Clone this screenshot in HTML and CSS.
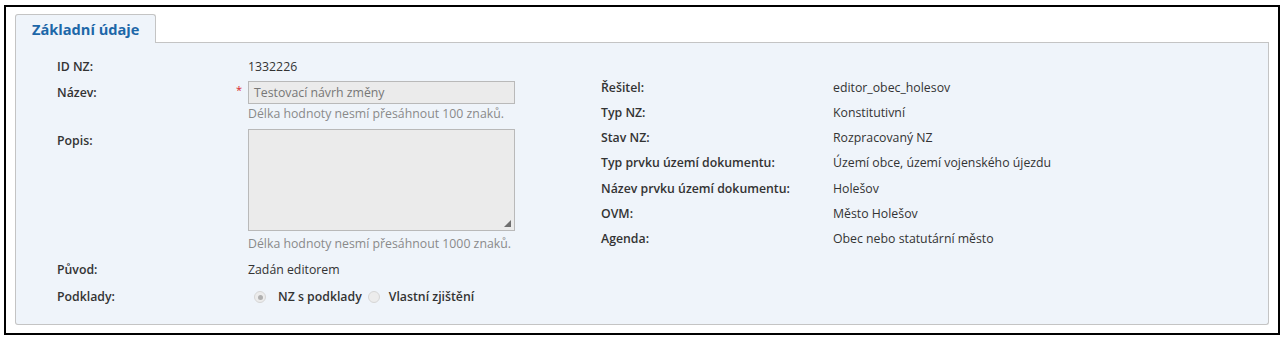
FILE: index.html
```html
<!DOCTYPE html>
<html lang="cs">
<head>
<meta charset="utf-8">
<title>Základní údaje</title>
<link rel="stylesheet" href="styles.css">
</head>
<body>
<div class="frame">
  <div class="tabs">
    <div class="tab">Základní údaje</div>
    <div class="tab-fill"></div>
  </div>
  <div class="panel">
    <div class="col-left">
      <div class="row r-id"><div class="lbl">ID NZ:</div><div class="val">1332226</div></div>
      <div class="row r-nazev">
        <div class="lbl lbl-field">Název:<span class="req">*</span></div>
        <div class="val">
          <div class="input">Testovací návrh změny</div>
          <div class="hint">Délka hodnoty nesmí přesáhnout 100 znaků.</div>
        </div>
      </div>
      <div class="row r-popis">
        <div class="lbl lbl-field">Popis:</div>
        <div class="val">
          <div class="textarea">
            <svg class="grip" width="7" height="7" viewBox="0 0 7 7"><path d="M7 0 L7 7 L0 7 Z" fill="#6f6f6f"/></svg>
          </div>
          <div class="hint hint-2">Délka hodnoty nesmí přesáhnout 1000 znaků.</div>
        </div>
      </div>
      <div class="row r-puvod"><div class="lbl">Původ:</div><div class="val">Zadán editorem</div></div>
      <div class="row r-podklady">
        <div class="lbl">Podklady:</div>
        <div class="val radios">
          <span class="radio checked r1"></span><span class="rlabel rl1">NZ s podklady</span>
          <span class="radio r2"></span><span class="rlabel rl2">Vlastní zjištění</span>
        </div>
      </div>
    </div>
    <div class="col-right">
      <div class="rrow"><div class="lbl">Řešitel:</div><div class="val">editor_obec_holesov</div></div>
      <div class="rrow"><div class="lbl">Typ NZ:</div><div class="val">Konstitutivní</div></div>
      <div class="rrow"><div class="lbl">Stav NZ:</div><div class="val">Rozpracovaný NZ</div></div>
      <div class="rrow"><div class="lbl">Typ prvku území dokumentu:</div><div class="val">Území obce, území vojenského újezdu</div></div>
      <div class="rrow"><div class="lbl">Název prvku území dokumentu:</div><div class="val">Holešov</div></div>
      <div class="rrow"><div class="lbl">OVM:</div><div class="val">Město Holešov</div></div>
      <div class="rrow"><div class="lbl">Agenda:</div><div class="val">Obec nebo statutární město</div></div>
    </div>
  </div>
</div>
</body>
</html>
```

FILE: styles.css
```css
* { box-sizing: border-box; }
html, body { margin: 0; padding: 0; background: #fff; }
body {
  font-family: "Open Sans", "Noto Sans", "DejaVu Sans", sans-serif;
  font-size: 12.3px;
  color: #333;
}
.frame {
  margin: 5px 0 0 4px;
  width: 1276px;
  height: 330px;
  border: 2px solid #000;
  padding: 7px 9px 8px 9px;
  display: flex;
  flex-direction: column;
}
.tabs {
  display: flex;
  height: 29px;
  flex: none;
}
.tab {
  height: 29px;
  padding: 0 16px;
  border: 1px solid #c4c4c4;
  border-bottom: none;
  border-radius: 3px 3px 0 0;
  background: #eff4fa;
  color: #1d67a8;
  font-weight: 700;
  font-size: 14.6px;
  display: flex;
  align-items: center;
}
.tab-fill {
  flex: 1;
  border-bottom: 1px solid #c4c4c4;
}
.panel {
  flex: 1;
  background: #eff4fa;
  border: 1px solid #c4c4c4;
  border-top: none;
  border-radius: 0 0 3px 3px;
  padding: 14px 0 0 41px;
  display: flex;
}
.lbl { font-weight: 600; color: #333; }
.val { color: #333; }
.col-left { width: 544px; flex: none; }
.row {
  display: grid;
  grid-template-columns: 191px 1fr;
  line-height: 20px;
}
.lbl-field {
  padding-top: 2px;
  display: flex;
  justify-content: space-between;
  padding-right: 6px;
}
.req {
  color: #d9252a;
  font-size: 11px;
  line-height: 11px;
  margin-top: 1px;
  font-weight: 400;
}
.r-nazev { margin-top: 4px; }
.input {
  width: 267px;
  height: 23px;
  background: #ebebeb;
  border: 1px solid #b9b9b9;
  color: #777;
  line-height: 21px;
  padding-left: 5px;
}
.hint { color: #8a8a8a; line-height: 20px; }
.hint-2 { margin-top: 3px; }
.r-popis { margin-top: 5px; }
.textarea {
  position: relative;
  width: 267px;
  height: 102px;
  background: #ebebeb;
  border: 1px solid #b9b9b9;
}
.grip {
  position: absolute;
  right: 3px;
  bottom: 3px;
}
.r-puvod { margin-top: 6px; }
.r-podklady { margin-top: 7px; }
.radios { display: flex; align-items: center; }
.radio {
  width: 12px;
  height: 12px;
  border-radius: 50%;
  border: 1px solid #d6d6d6;
  background: #ececec;
  display: inline-flex;
  align-items: center;
  justify-content: center;
  flex: none;
}
.radio.checked::after {
  content: "";
  width: 5px;
  height: 5px;
  border-radius: 50%;
  background: #b0b0b0;
}
.r1 { margin-left: 6px; }
.rlabel { font-weight: 600; }
.rl1 { margin-left: 12px; }
.r2 { margin-left: 6px; }
.rl2 { margin-left: 9px; }
.col-right { flex: 1; padding-top: 17.5px; }
.rrow {
  display: grid;
  grid-template-columns: 232px 1fr;
  line-height: 25.3px;
}
```
